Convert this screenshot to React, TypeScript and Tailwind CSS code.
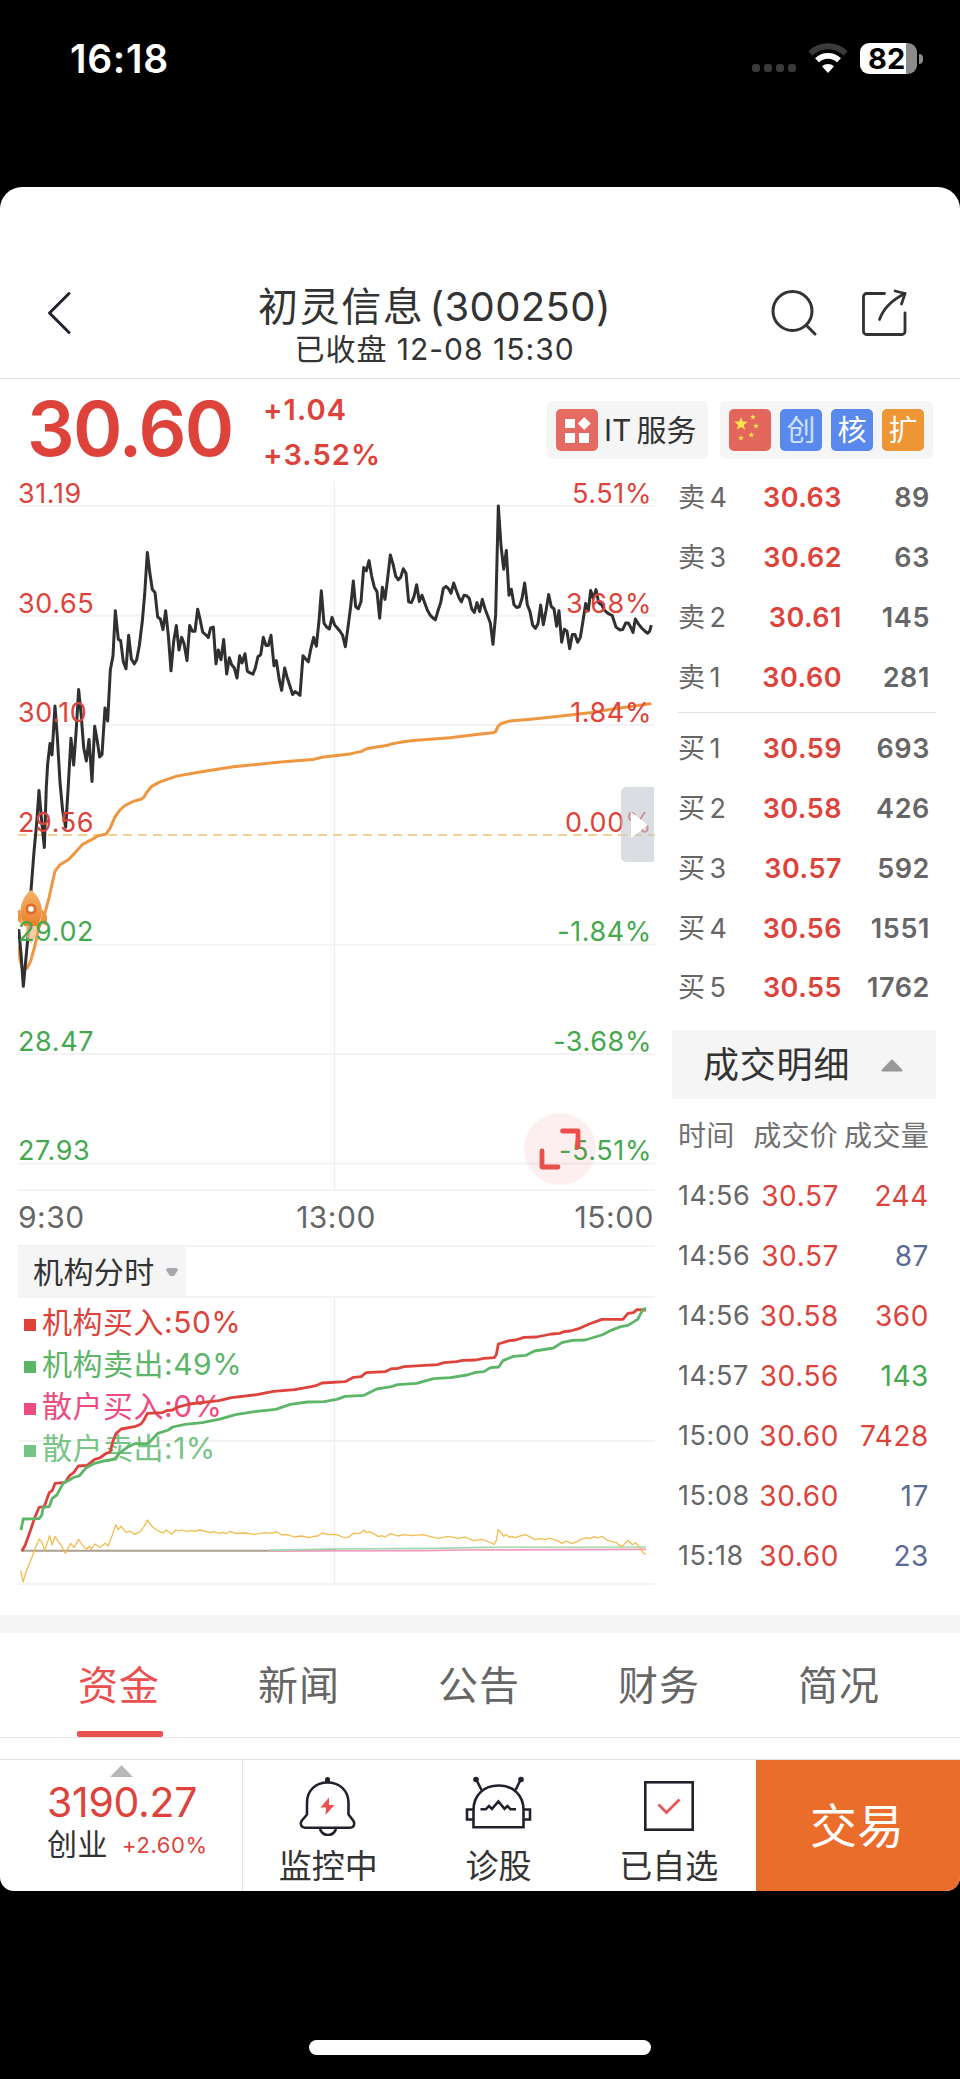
import React from 'react';
import clsx from 'clsx';

const priceLine =
  '56,1370 63,1430 70,1510 78,1440 86,1370 93,1275 102,1180 110,1110 117,1030 125,1105 133,1170 139,1020 143,965 150,915 156,943 165,823 172,900 180,1010 188,1080 197,1120 204,1030 213,902 221,968 228,890 236,783 244,850 251,925 259,958 267,905 276,1008 284,873 291,905 299,948 306,942 315,828 323,860 331,735 339,700 346,590 355,660 362,663 370,715 378,732 386,650 394,708 403,720 410,710 418,675 427,615 434,550 442,447 450,500 457,538 465,545 473,605 481,610 489,636 497,590 505,650 513,737 521,665 529,626 537,686 545,655 552,670 561,712 569,626 577,640 585,640 593,586 600,610 608,642 616,648 625,655 632,632 640,630 648,720 655,686 663,710 671,660 680,745 688,705 695,722 703,730 711,755 719,700 726,718 735,695 742,738 750,742 759,745 766,730 774,702 782,698 790,655 798,675 805,675 813,650 822,725 829,712 838,760 845,785 854,730 861,752 870,775 878,795 885,788 893,792 900,797 909,700 917,708 925,715 932,685 941,655 949,677 957,615 964,541 972,620 980,630 988,635 996,606 1004,625 1012,632 1020,640 1028,650 1036,678 1044,630 1052,580 1060,517 1067,580 1075,585 1083,568 1091,484 1099,492 1107,467 1115,505 1123,532 1131,543 1139,608 1147,532 1155,562 1163,510 1171,453 1179,475 1187,505 1195,514 1202,508 1210,487 1218,498 1226,568 1234,570 1242,555 1250,526 1258,567 1266,552 1274,570 1282,588 1290,600 1298,607 1306,612 1314,590 1322,570 1330,535 1338,530 1346,536 1353,547 1361,522 1369,540 1377,558 1384,568 1392,552 1400,553 1408,560 1415,585 1423,594 1431,570 1439,592 1447,562 1455,585 1463,602 1471,620 1479,672 1487,600 1495,333 1503,430 1511,488 1519,442 1527,552 1534,537 1542,575 1550,582 1558,580 1566,560 1574,522 1582,575 1590,592 1598,625 1606,633 1614,622 1622,576 1630,624 1638,590 1646,550 1654,580 1662,585 1670,628 1677,590 1685,667 1693,635 1701,640 1709,683 1717,648 1725,648 1733,667 1741,655 1749,615 1757,572 1765,590 1772,540 1780,560 1788,538 1796,570 1805,575 1813,588 1822,595 1837,602 1848,630 1860,637 1868,636 1877,620 1885,620 1892,630 1899,643 1906,610 1915,622 1925,632 1935,640 1943,645 1949,640 1954,625';

const averageLine =
  '56,1410 60,1445 66,1463 74,1469 82,1465 92,1448 105,1410 115,1370 135,1330 148,1290 156,1260 165,1228 180,1212 205,1200 225,1183 248,1162 272,1152 292,1142 318,1137 330,1123 345,1095 360,1078 375,1067 400,1057 425,1051 432,1046 440,1035 455,1020 480,1009 530,995 600,985 700,972 850,960 940,954 970,948 1004,945 1050,941 1063,938 1083,935 1100,928 1120,925 1160,920 1175,916 1210,911 1240,908 1300,904 1350,901 1430,893 1478,889 1487,886 1494,873 1504,866 1530,860 1600,855 1670,849 1710,845 1770,840 1820,833 1860,828 1930,820 1954,817';

const orgBuyLine =
  '52,843 60,825 70,790 82,745 93,712 105,710 117,668 124,662 131,640 155,637 165,617 175,608 186,588 207,586 225,568 237,564 250,552 262,545 268,515 276,490 288,477 320,470 335,462 342,450 350,430 385,428 395,422 410,420 420,412 450,402 520,392 550,383 610,374 650,364 700,359 740,350 750,347 765,339 820,335 840,322 858,320 870,308 915,305 930,296 943,296 960,290 1040,284 1055,278 1085,275 1100,271 1130,270 1150,265 1174,263 1179,255 1184,222 1210,212 1225,210 1245,202 1275,201 1310,192 1330,190 1340,185 1355,183 1375,176 1400,162 1430,148 1480,148 1492,130 1505,128 1513,119 1535,120';

const orgSellLine =
  '50,780 55,747 93,746 99,736 103,712 117,710 124,685 135,675 150,640 165,630 175,622 188,618 205,593 225,580 250,572 275,567 283,550 305,530 320,521 352,521 375,490 400,480 410,471 440,463 480,458 520,448 560,434 610,424 655,418 690,403 730,396 770,395 800,388 820,379 865,376 895,357 930,350 945,344 990,340 1030,326 1070,323 1110,315 1130,307 1150,305 1165,293 1185,291 1195,272 1220,259 1250,256 1270,243 1315,234 1335,218 1360,211 1390,210 1430,195 1450,182 1475,170 1492,166 1515,148 1528,118 1535,115';

const netLine =
  '49,902 55,936 62,905 72,875 82,840 93,807 100,817 106,842 112,820 118,797 124,825 131,799 138,815 145,825 155,850 168,820 176,833 187,808 197,828 206,837 213,828 217,838 225,822 237,832 250,820 257,828 267,795 275,764 281,780 287,768 300,787 308,783 319,793 333,785 342,770 350,750 362,770 375,782 388,789 395,780 408,793 418,780 425,783 432,780 445,785 455,781 462,784 475,780 500,788 508,785 520,790 530,787 537,791 545,784 560,790 580,789 605,793 630,788 640,790 658,786 670,795 682,794 700,801 715,798 735,803 745,799 755,798 765,789 780,794 798,793 820,804 830,800 840,790 855,790 865,780 870,788 878,785 900,800 907,797 915,801 928,791 945,798 960,794 980,797 1005,794 1040,805 1065,799 1090,805 1105,801 1125,812 1145,808 1162,816 1174,823 1179,812 1184,778 1190,788 1197,799 1203,793 1210,802 1216,799 1222,803 1248,794 1262,802 1272,809 1285,806 1296,809 1305,804 1318,810 1325,812 1335,820 1345,813 1358,820 1372,815 1378,809 1395,803 1402,806 1412,800 1420,804 1430,799 1445,812 1465,818 1470,824 1478,830 1492,811 1503,824 1510,818 1520,833 1530,851 1535,852';

const axisLabels = [
  { price: '31.19', rate: '5.51%', up: true },
  { price: '30.65', rate: '3.68%', up: true },
  { price: '30.10', rate: '1.84%', up: true },
  { price: '29.56', rate: '0.00%', up: true },
  { price: '29.02', rate: '-1.84%', up: false },
  { price: '28.47', rate: '-3.68%', up: false },
  { price: '27.93', rate: '-5.51%', up: false },
];

const asks = [
  { label: '卖 4', price: '30.63', volume: 89 },
  { label: '卖 3', price: '30.62', volume: 63 },
  { label: '卖 2', price: '30.61', volume: 145 },
  { label: '卖 1', price: '30.60', volume: 281 },
];

const bids = [
  { label: '买 1', price: '30.59', volume: 693 },
  { label: '买 2', price: '30.58', volume: 426 },
  { label: '买 3', price: '30.57', volume: 592 },
  { label: '买 4', price: '30.56', volume: 1551 },
  { label: '买 5', price: '30.55', volume: 1762 },
];

const trades = [
  { time: '14:56', price: '30.57', volume: 244, color: 'text-[#dd433b]' },
  { time: '14:56', price: '30.57', volume: 87, color: 'text-[#5a6b95]' },
  { time: '14:56', price: '30.58', volume: 360, color: 'text-[#dd433b]' },
  { time: '14:57', price: '30.56', volume: 143, color: 'text-[#45a84e]' },
  { time: '15:00', price: '30.60', volume: 7428, color: 'text-[#dd433b]' },
  { time: '15:08', price: '30.60', volume: 17, color: 'text-[#5a6b95]' },
  { time: '15:18', price: '30.60', volume: 23, color: 'text-[#5a6b95]' },
];

const legend = [
  { label: '机构买入:50%', text: 'text-[#dd433b]', box: 'bg-[#dd433b]' },
  { label: '机构卖出:49%', text: 'text-[#5cb568]', box: 'bg-[#5cb568]' },
  { label: '散户买入:0%', text: 'text-[#ec4c80]', box: 'bg-[#ec4c80]' },
  { label: '散户卖出:1%', text: 'text-[#77c487]', box: 'bg-[#77c487]' },
];

const tabs = ['资金', '新闻', '公告', '财务', '简况'];

const star = (cx: number, cy: number, r: number) =>
  Array.from({ length: 10 }, (_, i) => {
    const radius = i % 2 ? r * 0.42 : r;
    const angle = (Math.PI / 5) * i - Math.PI / 2;
    return `${(cx + radius * Math.cos(angle)).toFixed(2)},${(cy + radius * Math.sin(angle)).toFixed(2)}`;
  }).join(' ');

const StatusBar = () => (
  <div className="flex h-[187px] items-start justify-between pl-[70px] pr-[37px] pt-[39px] text-white">
    <span className="text-[39px] font-semibold leading-[40px] tracking-[0.7px]">16:18</span>
    <div className="flex items-center pt-[4px]">
      <div className="mr-[12px] mt-[19px] flex gap-[4px]">
        {[0, 1, 2, 3].map((dot) => (
          <span key={dot} className="size-[8px] rounded-[3px] bg-[#3a3a3a]" />
        ))}
      </div>
      <svg className="mr-[12px]" width="40" height="31" viewBox="0 0 40 31" fill="none">
        <path d="M2.5 10.5a25 25 0 0 1 35 0" stroke="#3a3a3a" strokeWidth="6" />
        <path d="M9 17.3a16 16 0 0 1 22 0" stroke="#fff" strokeWidth="5.6" />
        <path d="M20 30l-6-6.8a9.5 9.5 0 0 1 12 0z" fill="#fff" />
      </svg>
      <div className="flex h-[31px] w-[57px] items-center rounded-[9px] bg-[linear-gradient(90deg,#fff_81%,#8b8b8b_81%)] pl-[8px] text-[29px] font-bold leading-[31px] text-black">
        82
      </div>
      <span className="ml-[2px] h-[10px] w-[4px] rounded-r-full bg-[#8b8b8b]" />
    </div>
  </div>
);

const Header = () => (
  <div className="flex h-[192px] items-start justify-between border-b border-[#e2e2e2] pl-[46px] pr-[51px] pt-[98px]">
    <svg className="mt-[6px]" width="26" height="44" viewBox="0 0 26 44" fill="none">
      <path d="M23 2.5L3.5 22 23 41.5" stroke="#22202c" strokeWidth="3" strokeLinecap="round" strokeLinejoin="round" />
    </svg>
    <div className="ml-[27px] flex flex-col items-center whitespace-nowrap text-[#333]">
      <h1 className="text-[40px] leading-[44px]">
        <span className="tracking-[1.6px]">初灵信息</span>
        <span className="ml-[5px] tracking-[0.4px]">(300250)</span>
      </h1>
      <p className="text-[30px] leading-[40px] tracking-[1px]">已收盘 12-08 15:30</p>
    </div>
    <div className="flex gap-[41px]">
      <svg className="mt-[3px]" width="48" height="48" viewBox="0 0 48 48" fill="none" stroke="#333" strokeWidth="3" strokeLinecap="round">
        <circle cx="22.500" cy="23" r="19.500" />
        <path d="M37 38l8 8" />
      </svg>
      <svg className="mt-[3px]" width="50" height="50" viewBox="0 0 50 50" fill="none" stroke="#333" strokeWidth="2.8" strokeLinecap="round" strokeLinejoin="round">
        <path d="M25.500 5.500H7.500a3 3 0 0 0-3 3V43.500a3 3 0 0 0 3 3H43a3 3 0 0 0 3-3V25" />
        <path d="M20.500 31.500C24.500 20 34 11.500 46 5.500" />
        <path d="M36 3l10 2.500-3.500 10.500" />
      </svg>
    </div>
  </div>
);

const Summary = () => (
  <div className="flex h-[88px] items-start pl-[27px] pr-[27px] text-[#dd433b]">
    <div className="w-[236px] pt-[13px] text-[75px] font-semibold leading-[74px] tracking-[-1.8px]">30.60</div>
    <div className="flex flex-col pt-[8px] text-[29px] font-semibold leading-[45px] tracking-[1.100px]">
      <span>+1.04</span>
      <span>+3.52%</span>
    </div>
    <div className="ml-auto mt-[22px] flex gap-[12px] text-[#333]">
      <div className="flex h-[58px] w-[161px] items-center rounded-[6px] bg-[#f5f5f5] pl-[9px]">
        <svg width="42" height="42" viewBox="0 0 42 42">
          <rect width="42" height="42" rx="5" fill="#e56a61" />
          <path d="M9 10h10v9H9zM9 24h10v10H9zM23 24h10v10H23zM28.300 8l6.400 6.500-6.400 6.500-6.400-6.500z" fill="#fff" />
        </svg>
        <span className="ml-[6px] whitespace-nowrap text-[30px] leading-none">
          IT<span className="ml-[5px]">服务</span>
        </span>
      </div>
      <div className="flex h-[58px] items-center gap-[9px] rounded-[6px] bg-[#f5f5f5] px-[9px] text-[29px] leading-none text-white">
        <svg width="42" height="42" viewBox="0 0 42 42">
          <rect width="42" height="42" rx="5" fill="#e3665d" />
          <g fill="#fbe54c">
            <polygon points={star(12, 15, 7)} />
            <polygon points={star(24, 8, 3)} />
            <polygon points={star(27, 17, 3)} />
            <polygon points={star(22.3, 26, 3)} />
            <polygon points={star(12, 29, 3)} />
          </g>
        </svg>
        <span className="flex size-[42px] items-center justify-center rounded-[5px] bg-[#5989ec] text-[#cfe0ff]">创</span>
        <span className="flex size-[42px] items-center justify-center rounded-[5px] bg-[#5989ec]">核</span>
        <span className="flex size-[42px] items-center justify-center rounded-[5px] bg-[#ee9535]">扩</span>
      </div>
    </div>
  </div>
);

const Rocket = () => (
  <svg className="absolute left-0 top-[408px]" width="30" height="56" viewBox="0 0 30 56">
    <defs>
      <linearGradient id="rocket" x1="0" y1="0" x2="0" y2="1">
        <stop offset="0" stopColor="#f5b469" />
        <stop offset="1" stopColor="#ec7f2b" />
      </linearGradient>
    </defs>
    <path d="M2 20L0 22V32l4 3zM24 20l5 7v10l-6-3z" fill="#ee9440" />
    <path d="M13 1C5 7 1 18 3 28l3 9h14l3-9C26 18 21 7 13 1z" fill="url(#rocket)" />
    <path d="M7 37h12l-2 12-4 6-4-6z" fill="#f6c08f" opacity=".8" />
    <circle cx="13" cy="20" r="5.500" fill="#dd6d2c" />
    <circle cx="13" cy="20" r="2.800" fill="#fff" />
  </svg>
);

const PriceChart = () => (
  <div className="relative h-[708px] w-full">
    <svg className="absolute inset-0" width="637" height="708" viewBox="18 481 637 708" fill="none">
      <g stroke="#f3f3f5" strokeWidth="2">
        <path d="M18 506H655M18 615.700H655M18 725H655M18 944.700H655M18 1054H655M18 1163.500H655" />
        <path d="M334.500 481V1189" stroke="#ececf2" strokeWidth="1.200" />
      </g>
      <path d="M18 835H655" stroke="#f5cf93" strokeWidth="2" strokeDasharray="9 6" />
      <g transform="translate(0 370) scale(0.33333 0.40816)" strokeLinejoin="round">
        <polyline points={averageLine} stroke="#ee9640" strokeWidth="3" vectorEffect="non-scaling-stroke" />
        <polyline points={priceLine} stroke="#303030" strokeWidth="3" vectorEffect="non-scaling-stroke" />
      </g>
    </svg>
    <Rocket />
    <div className="relative pr-[3px] text-[27px] leading-[25px] tracking-[0.6px]">
      {axisLabels.map((row) => (
        <div
          key={row.price}
          className={clsx('flex h-[109.5px] justify-between', row.up ? 'text-[#dd433b]' : 'text-[#45a84e]')}
        >
          <span>{row.price}</span>
          <span>{row.rate}</span>
        </div>
      ))}
    </div>
    <div className="absolute right-[1px] top-[306px] flex h-[75px] w-[33px] items-center rounded-l-[5px] bg-[#c2c8d1]/60 pl-[10px]">
      <svg width="18" height="30" viewBox="0 0 18 30">
        <path d="M0 2l17 13L0 28z" fill="#fff" />
      </svg>
    </div>
    <svg className="absolute right-[59px] top-[632px]" width="72" height="72" viewBox="0 0 72 72" fill="none">
      <circle cx="36" cy="36" r="36" fill="#ee5350" opacity=".09" />
      <path d="M38.500 18H54V34M18 38V54H34" stroke="#ea4f4c" strokeWidth="4.800" strokeLinecap="round" strokeLinejoin="round" />
    </svg>
  </div>
);

const FlowChart = () => (
  <div className="relative h-[289px] w-full">
    <svg className="absolute inset-0" width="637" height="289" viewBox="18 1296 637 289" fill="none">
      <path d="M18 1297H655M18 1441H655M18 1584H655" stroke="#f3f3f5" strokeWidth="2" />
      <path d="M334.500 1297V1584" stroke="#ececf2" strokeWidth="1.200" />
    </svg>
    <ul className="relative pl-[6px] pt-[5px] text-[30px] leading-[42px]">
      {legend.map((item) => (
        <li key={item.label} className={clsx('flex items-center whitespace-nowrap tracking-[0.5px]', item.text)}>
          <span className={clsx('mr-[6px] mt-[5px] size-[12px]', item.box)} />
          {item.label}
        </li>
      ))}
    </ul>
    <svg className="absolute inset-0" width="637" height="289" viewBox="18 1296 637 289" fill="none">
      <g transform="translate(0 1270) scale(0.42088 0.33333)" strokeLinejoin="round">
        <polyline points="50,842 640,842 800,840" stroke="#aaa090" strokeWidth="2" vectorEffect="non-scaling-stroke" />
        <polyline points="640,843 1010,842 1100,840 1320,839 1535,838" stroke="#f19abb" strokeWidth="1.600" vectorEffect="non-scaling-stroke" />
        <polyline points="640,841 780,837 1030,835 1150,832 1535,831" stroke="#a3d8ae" strokeWidth="1.600" vectorEffect="non-scaling-stroke" />
        <polyline points={netLine} stroke="#f0bd4e" strokeWidth="1.300" vectorEffect="non-scaling-stroke" />
        <polyline points={orgBuyLine} stroke="#dd433b" strokeWidth="2.800" vectorEffect="non-scaling-stroke" />
        <polyline points={orgSellLine} stroke="#5cb568" strokeWidth="2.800" vectorEffect="non-scaling-stroke" />
      </g>
    </svg>
  </div>
);

const QuoteRow = ({ label, price, volume }: { label: string; price: string; volume: number }) => (
  <div className="flex h-[59.75px] items-center pl-[6px] pr-[6px] text-[27px] leading-none text-[#666]">
    <span className="w-[60px] whitespace-nowrap [word-spacing:-3px]">{label}</span>
    <span className="w-[104px] text-right font-semibold tracking-[0.5px] text-[#dd433b]">{price}</span>
    <span className="ml-auto font-semibold tracking-[0.6px]">{volume}</span>
  </div>
);

const OrderBook = () => (
  <div className="w-[264px] pt-px">
    {asks.map((row) => (
      <QuoteRow key={row.label} {...row} />
    ))}
    <div className="ml-[6px] mb-[6px] mt-[5px] h-px bg-[#e0e0e0]" />
    {bids.map((row) => (
      <QuoteRow key={row.label} {...row} />
    ))}

    <div className="mt-[12px] flex h-[69px] items-center bg-[#f5f5f5] pl-[31px] pt-[2px] text-[36px] leading-none tracking-[0.8px] text-[#333]">
      成交明细
      <svg className="ml-[31px]" width="22" height="13" viewBox="0 0 22 13">
        <path d="M11 1.500L20.500 11.500H1.500z" fill="#999" stroke="#999" strokeWidth="2" strokeLinejoin="round" />
      </svg>
    </div>
    <div className="flex h-[67px] items-center justify-end whitespace-nowrap pl-[6px] pr-[7px] pt-[8px] text-[28px] leading-none tracking-[0.3px] text-[#707070]">
      <span className="mr-auto">时间</span>
      <span>成交价</span>
      <span className="ml-[6px]">成交量</span>
    </div>
    {trades.map((trade, index) => (
      <div key={index} className="flex h-[60px] items-center pl-[6px] pr-[7px] text-[28px] leading-none tracking-[0.6px]">
        <span className="w-[73px] whitespace-nowrap text-[27px] text-[#666]">{trade.time}</span>
        <span className="w-[88px] text-right text-[#dd433b]">{trade.price}</span>
        <span className={clsx('ml-auto', trade.color)}>{trade.volume}</span>
      </div>
    ))}
  </div>
);

const BellIcon = () => (
  <svg width="60" height="60" viewBox="0 0 60 60" fill="none" stroke="#22202c" strokeWidth="2.600" strokeLinejoin="round">
    <path d="M9 38.500V27C9 14 18 6.500 29.500 6.500S50.500 14 50.500 27V38.500L55.500 45C57.500 48.500 55.500 51.700 52.500 51.700H7C3.500 51.700 1.500 48.500 3.500 45z" />
    <path d="M22 53c1.500 4 4.500 6 8 6s6.500-2 8-6" />
    <path d="M27 6V3.500a2.500 2.500 0 0 1 5 0V6z" fill="#22202c" stroke="none" />
    <path d="M31 21.500L22.500 31.500H28L27.500 39 36.500 29H31z" fill="#ea504d" stroke="none" />
  </svg>
);

const RobotIcon = () => (
  <svg width="68" height="60" viewBox="0 0 68 60" fill="none" stroke="#22202c" strokeWidth="2.600">
    <path d="M9.500 51.300V34C9.500 19 20 9.500 34.500 9.500S59.500 19 59.500 34V51.300z" />
    <path d="M9.500 33.500H3V43.500H9.500M59.500 33.500H66V43.500H59.500M17.500 14L12.500 4M51.500 14L56.500 4" />
    <path d="M16.500 33.300H21.700L25 30 28 32.800 34.400 25.500 40.500 32.800 43.500 30 46.500 33.300H52" />
    <circle cx="12" cy="3.500" r="2.800" fill="#22202c" stroke="none" />
    <circle cx="57" cy="3.500" r="2.800" fill="#22202c" stroke="none" />
  </svg>
);

const CheckIcon = () => (
  <svg width="50" height="60" viewBox="0 0 50 60" fill="none">
    <rect x="1.300" y="6.300" width="47.400" height="47.400" stroke="#22202c" strokeWidth="2.600" />
    <path d="M14.500 28.500L22.500 36.500 35.500 23.500" stroke="#ea5557" strokeWidth="2.800" />
  </svg>
);

const actions = [
  { label: '监控中', icon: BellIcon },
  { label: '诊股', icon: RobotIcon },
  { label: '已自选', icon: CheckIcon },
];

const BottomBar = () => (
  <div className="mt-[21px] flex h-[132px] border-t border-[#e2e2e2]">
    <div className="flex w-[243px] flex-col border-r border-[#e2e2e2] pl-[47px] pt-[5px]">
      <svg className="ml-[63px]" width="23" height="12" viewBox="0 0 23 12">
        <path d="M11.500 0L23 12H0z" fill="#b9b9b9" />
      </svg>
      <span className="mt-[3px] text-[41px] leading-[44px] tracking-[-0.3px] text-[#dd433b]">3190.27</span>
      <div className="flex items-center whitespace-nowrap leading-[39px]">
        <span className="text-[30px] tracking-[0.5px] text-[#333]">创业</span>
        <span className="ml-[14px] mt-[2px] text-[22px] tracking-[0.6px] text-[#dd433b]">+2.60%</span>
      </div>
    </div>
    <div className="flex flex-1 pr-[2px]">
      {actions.map(({ label, icon: Icon }) => (
        <div key={label} className="flex flex-1 flex-col items-center pt-[16px] text-[#333]">
          <Icon />
          <span className="mt-[10px] text-[33px] leading-[40px]">{label}</span>
        </div>
      ))}
    </div>
    <button className="w-[204px] bg-[#ea6d2c] pb-px pr-[2px] text-[47px] leading-none text-white">交易</button>
  </div>
);

export default function App() {
  return (
    <div className="h-[2079px] w-[960px] overflow-hidden bg-black font-['Inter','Noto_Sans_CJK_SC',sans-serif]">
      <StatusBar />
      <main className="h-[1704px] overflow-hidden rounded-b-[14px] rounded-t-[22px] bg-white">
        <Header />
        <Summary />

        <div className="flex h-[1148px] justify-between pl-[18px] pr-[24px]">
          <div className="w-[637px] pt-[14px]">
            <PriceChart />
            <div className="flex h-[58px] items-center justify-between border-y-2 border-[#f3f3f5] pb-[3px] pr-px text-[30px] leading-none tracking-[0.5px] text-[#666]">
              <span className="w-[82px]">9:30</span>
              <span>13:00</span>
              <span className="flex w-[82px] justify-end">15:00</span>
            </div>
            <div className="flex h-[49px] w-[168px] items-center bg-[#f5f5f5] pl-[15px] pt-px text-[30px] leading-none tracking-[0.4px] text-[#333]">
              <span className="whitespace-nowrap">机构分时</span>
              <svg className="ml-[11px]" width="12" height="9" viewBox="0 0 12 9">
                <path d="M1 0H11L12 2 8 8H4L0 2z" fill="#a6a8ae" />
              </svg>
            </div>
            <FlowChart />
          </div>
          <OrderBook />
        </div>

        <div className="h-[18px] bg-[#f5f5f5]" />
        <nav className="flex h-[105px] border-b border-[#e2e2e2] pl-[29px] pr-[31px]">
          {tabs.map((tab, index) => (
            <div
              key={tab}
              className={clsx(
                'flex flex-1 flex-col items-center pt-[24px] text-[40px] leading-[58px] tracking-[1px]',
                index === 0 ? 'text-[#ea504d]' : 'text-[#666]'
              )}
            >
              {tab}
              {index === 0 && <span className="ml-[2px] mt-auto h-[6px] w-[86px] rounded-[2px] bg-[#ea504d]" />}
            </div>
          ))}
        </nav>
        <BottomBar />
      </main>
      <div className="mx-auto mt-[149px] h-[15px] w-[342px] rounded-full bg-white" />
    </div>
  );
}
